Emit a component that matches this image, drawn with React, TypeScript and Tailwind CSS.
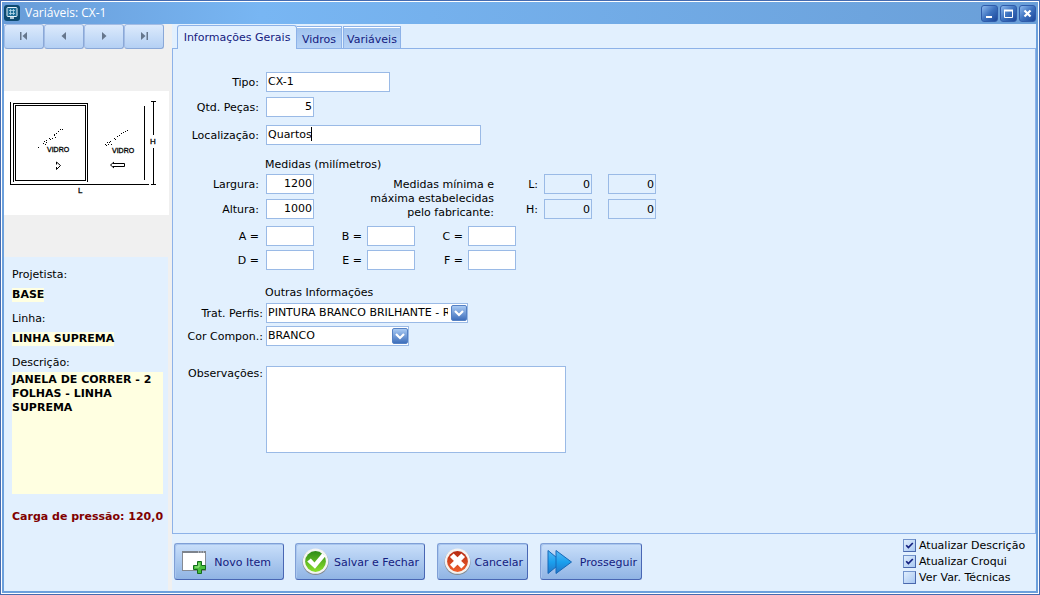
import { useState, type ReactNode } from "react";

const inputClass =
  "h-5 border border-[#9abae6] bg-white px-px pb-px text-[11px] leading-[14px] text-black outline-none";
const readOnlyClass =
  "h-5 w-12 border border-[#9abae6] bg-[#e2f0fe] px-px text-right text-[11px] leading-[14px] text-black outline-none";

function NavButton({ label, children }: { label: string; children: ReactNode }) {
  return (
    <button
      type="button"
      aria-label={label}
      className="flex h-[25px] w-10 items-center justify-center rounded-[3px] border border-[#a3bce4] border-r-[#8aa8d8] border-b-[#8aa8d8] bg-linear-to-b from-[#dceafc] to-[#b4d0f4] pb-0.5"
    >
      <svg width="10" height="8" viewBox="0 0 10 8" fill="#66768c">
        {children}
      </svg>
    </button>
  );
}

function WindowButton({ label, children }: { label: string; children: ReactNode }) {
  return (
    <button
      type="button"
      aria-label={label}
      className="h-[17px] w-[17px] rounded-[3px] border border-[#2f5cab] bg-linear-to-br from-[#8db9ee] via-[#3d72bf] to-[#1c479b]"
    >
      <svg width="15" height="15" viewBox="0 0 15 15" fill="none" stroke="#fff">
        {children}
      </svg>
    </button>
  );
}

function Field({
  id,
  label,
  value = "",
  wide = "w-12",
  labelClass = "mr-[7px] w-[86px]",
  right = false,
}: {
  id: string;
  label: string;
  value?: string;
  wide?: string;
  labelClass?: string;
  right?: boolean;
}) {
  return (
    <div className="flex items-center">
      <label htmlFor={id} className={`pt-0.5 text-right whitespace-nowrap ${labelClass}`}>
        {label}
      </label>
      <input id={id} defaultValue={value} className={`${inputClass} ${wide} ${right ? "text-right" : ""}`} />
    </div>
  );
}

function Combo({ id, label, value, wide }: { id: string; label: string; value: string; wide: string }) {
  return (
    <div className="flex items-center">
      <label htmlFor={id} className="mr-[3px] w-[90px] pt-0.5 text-right whitespace-nowrap">
        {label}
      </label>
      <div className={`relative ${wide}`}>
        <select
          id={id}
          className="block h-5 w-full appearance-none overflow-hidden border border-[#9abae6] bg-white pr-[19px] pl-px text-[11px] leading-[14px] text-black outline-none"
        >
          <option>{value}</option>
        </select>
        <span className="pointer-events-none absolute top-0.5 right-px h-4 w-4 rounded-[2px] border border-[#5581c4] bg-linear-to-b from-[#a9caf3] to-[#3f6fbb]">
          <svg width="14" height="14" viewBox="0 0 14 14" fill="none" stroke="#fff" strokeWidth="2.2">
            <path d="M3 5 L7 9 L11 5" />
          </svg>
        </span>
      </div>
    </div>
  );
}

function ActionButton({ label, wide, children }: { label: string; wide: string; children: ReactNode }) {
  return (
    <button
      type="button"
      className={`flex h-[37px] items-center justify-between rounded-[3px] border border-[#7f9fd6] border-r-[#4967b4] border-b-[#4967b4] bg-linear-to-b from-[#c9dffa] to-[#90b4e4] pl-1.5 whitespace-nowrap text-[#14207f] shadow-[inset_1px_1px_0_#a9c6ee] ${wide}`}
    >
      {children}
      <span className="pt-0.5">{label}</span>
    </button>
  );
}

function Check({ label, initial }: { label: string; initial: boolean }) {
  const [on, setOn] = useState(initial);
  return (
    <label className="flex h-4 items-center gap-[3px] whitespace-nowrap">
      <span className="relative block h-[13px] w-[13px]">
        <input
          type="checkbox"
          checked={on}
          onChange={() => setOn(!on)}
          className="block h-[13px] w-[13px] appearance-none border border-[#7394cc] border-r-[#4a68ad] border-b-[#4a68ad] bg-linear-to-br from-[#e0eefd] to-[#a9c8f1]"
        />
        {on && (
          <svg
            className="pointer-events-none absolute top-0 left-0"
            width="13"
            height="13"
            viewBox="0 0 13 13"
            fill="none"
            stroke="#14207f"
            strokeWidth="1.7"
          >
            <path d="M3.2 6.2 L5.4 8.6 L9.8 4" />
          </svg>
        )}
      </span>
      <span className="pt-0.5">{label}</span>
    </label>
  );
}

const leftDots = [
  [38, 147], [43, 143], [45, 144], [46, 142], [44, 141], [46, 140], [49, 138], [50, 139],
  [52, 138], [54, 135], [55, 137], [54, 134], [56, 133], [58, 131], [60, 129], [62, 129],
];
const rightDots = [
  [105, 144], [106, 145], [108, 144], [107, 142], [109, 142], [111, 144], [110, 141],
  [114, 138], [115, 139], [117, 136], [119, 135], [121, 133], [123, 132], [125, 131], [127, 130],
];

function Sketch() {
  return (
    <svg
      className="block bg-white"
      width="165"
      height="124"
      viewBox="4 91 165 124"
      fill="none"
      stroke="#000"
      role="img"
      aria-label="Croqui"
    >
      <g shapeRendering="crispEdges">
        <path d="M10.5 102V184.5H149" />
        <path d="M13.5 182V103.5H87.5V182" />
        <path d="M15.5 105.5H85.5V180.5H15.5Z" />
        <path d="M144.5 106V180" />
        <path d="M151 101.5H156M153.5 101V135M153.5 148V184M151 184.5H156" />
        {[...leftDots, ...rightDots].map(([x, y]) => (
          <rect key={`${x}-${y}`} x={x} y={y} width="1" height="1" fill="#000" stroke="none" />
        ))}
      </g>
      <path d="M56.5 162L60.5 165.5L56.5 169.5M56.5 162V164.5M56.5 167V169.5" />
      <path d="M114 162L110.5 165L114 168M113 163.5H124.5V166.5H113" />
      <g fill="#000" stroke="#000" strokeWidth="0.3" fontFamily="Liberation Sans, sans-serif" fontSize="7">
        <text x="47" y="152">VIDRO</text>
        <text x="112" y="153">VIDRO</text>
        <text x="150" y="144" fontSize="8">H</text>
        <text x="78" y="193" fontSize="8">L</text>
      </g>
    </svg>
  );
}

export default function App() {
  return (
    <div className="flex min-h-screen flex-col border border-[#456bb0] bg-white p-px font-['DejaVu_Sans','Liberation_Sans',sans-serif] text-[11px] leading-[14px] text-black">
      <div className="flex flex-1 flex-col bg-[#6ca0dc] px-0.5 pb-0.5">
        <header className="-mx-0.5 flex h-[22px] items-center bg-linear-to-r from-[#689cd8] via-[#78b6f3] via-25% to-[#6a9fd8] pr-0.5 pl-0.5">
          <svg width="16" height="16" viewBox="0 0 16 16">
            <rect width="16" height="16" rx="3" fill="#0d4a70" />
            <rect x="3" y="2.5" width="10" height="9" rx="1" fill="#1d6d96" stroke="#e6f3fa" />
            <path d="M5 5.5H11M5 8.5H11M6.5 4V10M9.5 4V10" stroke="#b5d8ea" strokeWidth="0.8" />
            <path d="M6 13H10" stroke="#e6f3fa" strokeWidth="1.5" />
          </svg>
          <h1 className="ml-[5px] font-['Open_Sans','Noto_Sans',sans-serif] text-[12px] leading-4 text-white">
            Variáveis: CX-1
          </h1>
          <div className="ml-auto flex gap-0.5">
            <WindowButton label="Minimizar">
              <path d="M4 11H10" strokeWidth="2" />
            </WindowButton>
            <WindowButton label="Maximizar">
              <path d="M3.5 4V11.5H11.5V4" />
              <path d="M3 4.5H12" strokeWidth="2" />
            </WindowButton>
            <WindowButton label="Fechar">
              <path d="M4.5 4.5L10.5 10.5M10.5 4.5L4.5 10.5" strokeWidth="2.2" />
            </WindowButton>
          </div>
        </header>

        <div className="flex flex-1 bg-[#f0f0f0]">
          <aside className="mr-[3px] flex w-[165px] shrink-0 flex-col">
            <nav className="flex">
              <NavButton label="Primeiro">
                <path d="M1 0H2.5V8H1ZM8 0V8L3.5 4Z" />
              </NavButton>
              <NavButton label="Anterior">
                <path d="M7 0V8L2.5 4Z" />
              </NavButton>
              <NavButton label="Próximo">
                <path d="M3 0V8L7.5 4Z" />
              </NavButton>
              <NavButton label="Último">
                <path d="M2 0V8L6.5 4ZM7.5 0H9V8H7.5Z" />
              </NavButton>
            </nav>
            <div className="py-[42px]">
              <Sketch />
            </div>
            <dl className="mr-px flex-1 bg-[#e2f0fe] pt-[11px] pr-[5px] pl-2">
              <dt>Projetista:</dt>
              <dd className="mt-1.5 flex font-bold">
                <span className="bg-[#ffffe1]">BASE</span>
              </dd>
              <dt className="mt-2.5">Linha:</dt>
              <dd className="mt-1.5 flex font-bold">
                <span className="bg-[#ffffe1]">LINHA SUPREMA</span>
              </dd>
              <dt className="mt-2.5">Descrição:</dt>
              <dd className="mt-0.5 min-h-[122px] bg-[#ffffe1] pt-px font-bold">
                JANELA DE CORRER - 2 FOLHAS - LINHA SUPREMA
              </dd>
              <dd className="mt-4 font-bold whitespace-nowrap text-[#800000]">Carga de pressão: 120,0</dd>
            </dl>
          </aside>

          <main className="flex min-w-0 flex-1 flex-col bg-[#e2f0fe]">
            <div role="tablist" className="flex h-6 items-end pl-[5px] text-[#14207f]">
              <button
                type="button"
                role="tab"
                aria-selected="true"
                className="relative -mb-px h-6 w-[120px] rounded-t-[3px] border border-b-0 border-[#8db2e8] bg-[#e2f0fe] whitespace-nowrap"
              >
                Informações Gerais
              </button>
              <button
                type="button"
                role="tab"
                aria-selected="false"
                className="h-[22px] w-[45px] border border-b-0 border-l-0 border-[#8db2e8] bg-linear-to-b from-[#9fc2ee] to-[#b7d3f6] pt-1 shadow-[inset_0_1px_0_#fff]"
              >
                Vidros
              </button>
              <button
                type="button"
                role="tab"
                aria-selected="false"
                className="ml-px h-[22px] w-[58px] border border-b-0 border-[#8db2e8] bg-linear-to-b from-[#9fc2ee] to-[#b7d3f6] pt-1 shadow-[inset_0_1px_0_#fff]"
              >
                Variáveis
              </button>
            </div>

            <form className="flex-1 border border-[#8db2e8] pt-[23px]">
              <Field id="tipo" label="Tipo:" value="CX-1" wide="w-[124px]" />
              <div className="mt-[5px]">
                <Field id="qtd" label="Qtd. Peças:" value="5" right />
              </div>
              <div className="relative mt-2">
                <Field id="local" label="Localização:" value="Quartos" wide="w-[215px]" />
                <span className="absolute top-0.5 left-[138px] h-3.5 w-px bg-black" />
              </div>

              <h2 className="mt-[13px] ml-[92px]">Medidas (milímetros)</h2>
              <div className="mt-0.5 flex">
                <div className="flex flex-col gap-[5px]">
                  <Field id="largura" label="Largura:" value="1200" right />
                  <Field id="altura" label="Altura:" value="1000" right />
                </div>
                <p className="w-[180px] pt-1 text-right">
                  Medidas mínima e
                  <br />
                  máxima estabelecidas
                  <br />
                  pelo fabricante:
                </p>
                <div className="flex flex-col gap-[5px]">
                  {["L", "H"].map((axis) => (
                    <div key={axis} className="flex items-center">
                      <label htmlFor={`min${axis}`} className="mr-1.5 w-11 pt-0.5 text-right">
                        {axis}:
                      </label>
                      <input id={`min${axis}`} readOnly value="0" className={readOnlyClass} />
                      <input
                        aria-label={`${axis} máxima`}
                        readOnly
                        value="0"
                        className={`ml-4 ${readOnlyClass}`}
                      />
                    </div>
                  ))}
                </div>
              </div>

              <div className="mt-1.5 flex">
                <Field id="a" label="A =" />
                <Field id="b" label="B =" labelClass="mr-[5px] w-12" />
                <Field id="c" label="C =" labelClass="mr-[5px] w-12" />
              </div>
              <div className="mt-1 flex">
                <Field id="d" label="D =" />
                <Field id="e" label="E =" labelClass="mr-[5px] w-12" />
                <Field id="f" label="F =" labelClass="mr-[5px] w-12" />
              </div>

              <h2 className="mt-4 ml-[92px]">Outras Informações</h2>
              <div className="mt-[3px] flex flex-col gap-[3px]">
                <Combo id="perfis" label="Trat. Perfis:" value="PINTURA BRANCO BRILHANTE - R" wide="w-[202px]" />
                <Combo id="cor" label="Cor Compon.:" value="BRANCO" wide="w-[143px]" />
              </div>

              <div className="mt-5 flex items-start">
                <label htmlFor="obs" className="mr-[3px] w-[90px] pt-px text-right">
                  Observações:
                </label>
                <textarea
                  id="obs"
                  className="block h-[87px] w-[300px] resize-none border border-[#9abae6] bg-white px-px outline-none"
                />
              </div>
            </form>

            <footer className="flex items-start pl-0.5">
              <div className="flex pt-[9px] pb-[11px]">
                <ActionButton label="Novo Item" wide="w-[110px] pr-3">
                  <svg width="26" height="26" viewBox="0 0 26 26">
                    <rect x="1.5" y="3.5" width="23" height="18" fill="#fff" stroke="#858a92" />
                    <rect x="1" y="2" width="24" height="2" fill="#7d838c" />
                    <path d="M17 3H18M19.5 3H20.5M22 3H23" stroke="#e8eaee" />
                    <path
                      d="M16.5 12.5H20.5V16.5H24.5V20.5H20.5V24.5H16.5V20.5H12.5V16.5H16.5Z"
                      fill="#49bf3b"
                      stroke="#146b1c"
                    />
                    <path d="M18 14V18H14" stroke="#a6eb91" fill="none" />
                  </svg>
                </ActionButton>
                <div className="ml-[11px]">
                  <ActionButton label="Salvar e Fechar" wide="w-[130px] pr-[5px]">
                    <svg width="27" height="27" viewBox="0 0 26 26">
                      <defs>
                        <linearGradient id="green" x1="0" y1="0" x2="0" y2="1">
                          <stop offset="0" stopColor="#2e8b18" />
                          <stop offset="1" stopColor="#8be02c" />
                        </linearGradient>
                      </defs>
                      <circle cx="13" cy="13.5" r="12.5" fill="#858b91" />
                      <circle cx="13" cy="12.7" r="12.2" fill="#f4f5f3" />
                      <circle cx="13" cy="13" r="10" fill="url(#green)" />
                      <path d="M5 13L8.5 10L12 14L19.5 5L22.5 8L12.5 20Z" fill="#fff" />
                    </svg>
                  </ActionButton>
                </div>
                <div className="ml-3">
                  <ActionButton label="Cancelar" wide="w-[91px] pr-1">
                    <svg width="27" height="27" viewBox="0 0 26 26">
                      <defs>
                        <linearGradient id="red" x1="0" y1="0" x2="0" y2="1">
                          <stop offset="0" stopColor="#b52a12" />
                          <stop offset="1" stopColor="#f0602c" />
                        </linearGradient>
                      </defs>
                      <circle cx="13" cy="13.5" r="12.5" fill="#858b91" />
                      <circle cx="13" cy="12.7" r="12.2" fill="#f4f3f2" />
                      <circle cx="13" cy="13" r="10" fill="url(#red)" />
                      <path d="M7.5 7L18.5 18M18.5 7L7.5 18" stroke="#fff" strokeWidth="5" />
                    </svg>
                  </ActionButton>
                </div>
                <div className="ml-3">
                  <ActionButton label="Prosseguir" wide="w-[102px] pr-1">
                    <svg width="26" height="26" viewBox="0 0 26 26">
                      <defs>
                        <linearGradient id="blue" x1="0" y1="0" x2="0" y2="1">
                          <stop offset="0" stopColor="#58b9f5" />
                          <stop offset="0.5" stopColor="#1aa0ee" />
                          <stop offset="1" stopColor="#2275c8" />
                        </linearGradient>
                      </defs>
                      <g fill="url(#blue)" stroke="#1668b8">
                        <path d="M1 1.5L15 13L1 24.5Z" />
                        <path d="M9 1.5L24.5 13L9 24.5Z" />
                      </g>
                    </svg>
                  </ActionButton>
                </div>
              </div>
              <div className="ml-auto w-[133px] shrink-0 pt-[3px]">
                <Check label="Atualizar Descrição" initial={true} />
                <Check label="Atualizar Croqui" initial={true} />
                <Check label="Ver Var. Técnicas" initial={false} />
              </div>
            </footer>
          </main>
        </div>
      </div>
    </div>
  );
}
